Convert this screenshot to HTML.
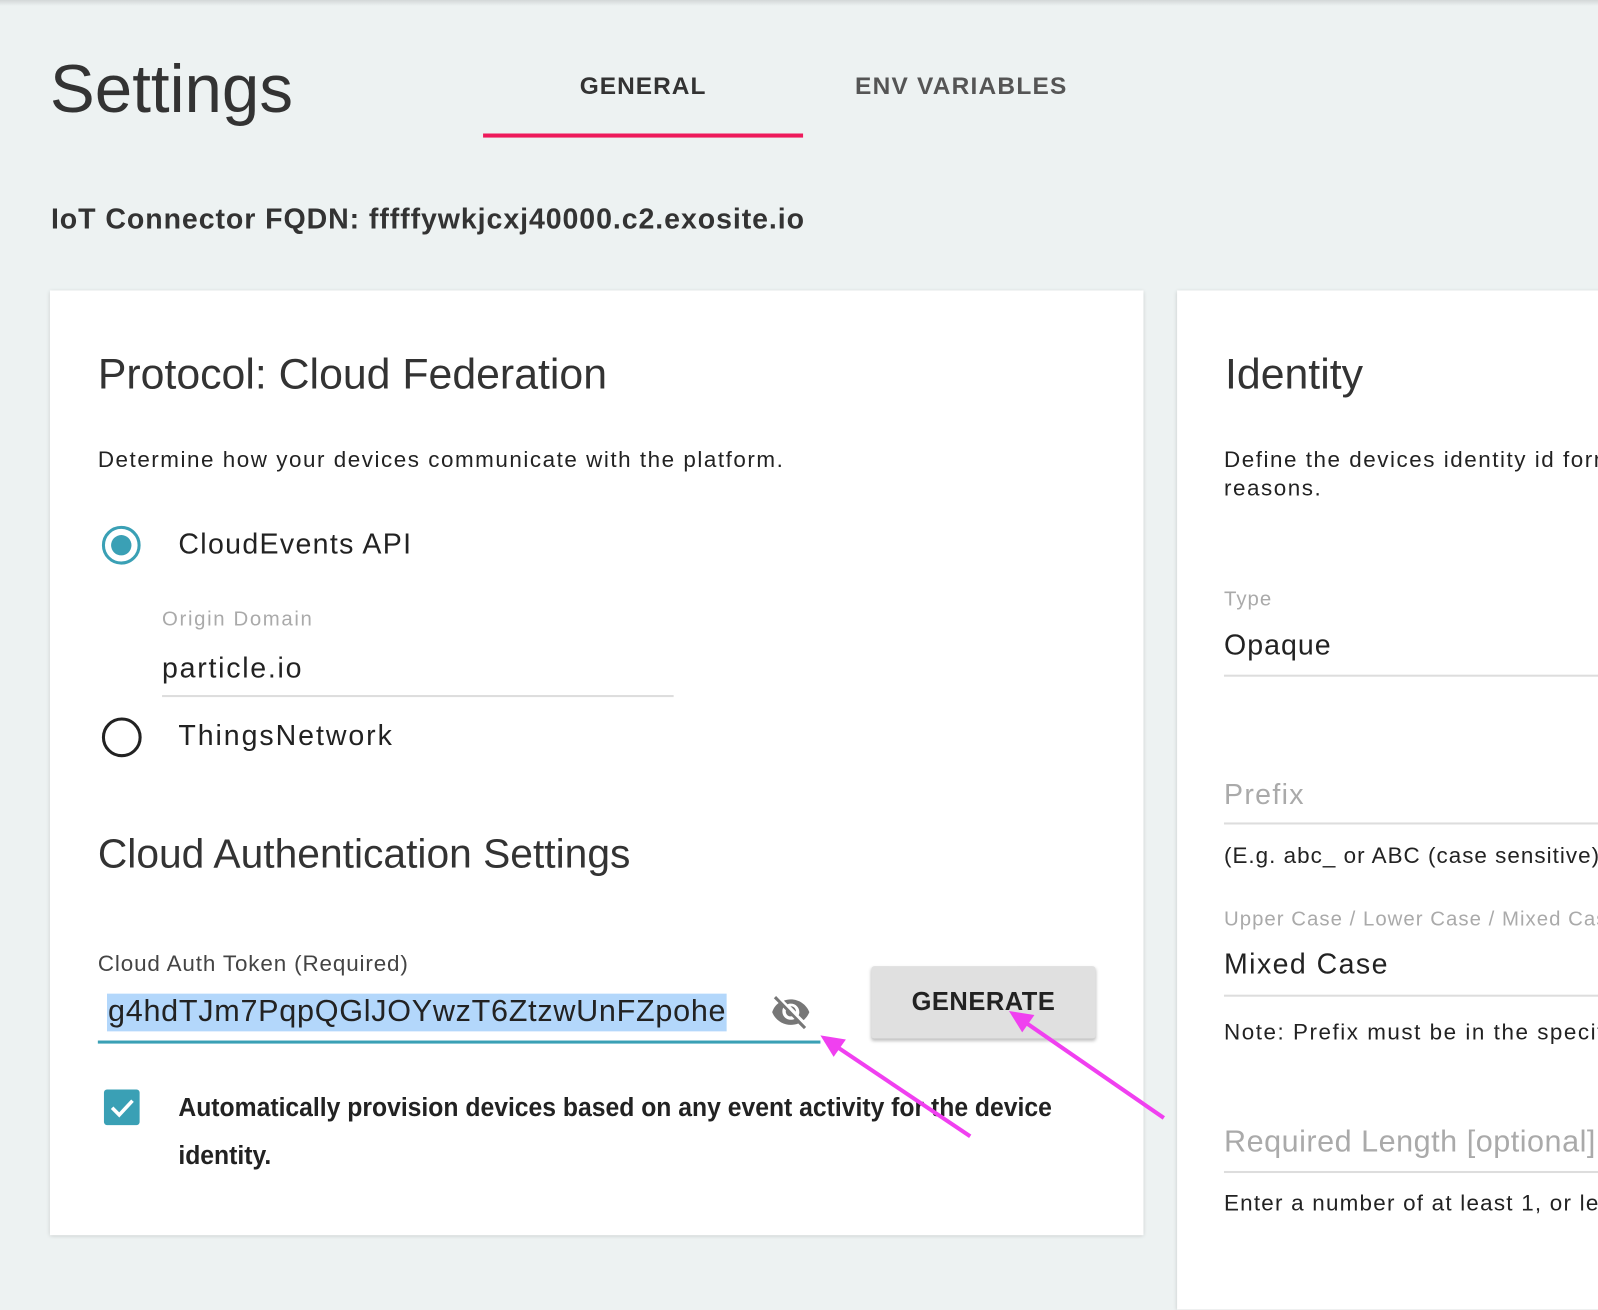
<!DOCTYPE html>
<html><head><meta charset="utf-8"><style>
html,body{margin:0;padding:0;width:1598px;height:1258px;overflow:hidden;background:#edf2f2;}
#w{position:absolute;left:0;top:0;width:1568px;height:1234px;transform:scale(1.01913);transform-origin:0 0;font-family:"Liberation Sans",sans-serif;color:#222;}
.t{position:absolute;white-space:nowrap;line-height:1;}
.card{position:absolute;background:#fff;box-shadow:0 1px 4px rgba(0,0,0,.18);}
.ln{position:absolute;height:2px;background:#ddd;}
.g{color:#aaa;}
</style></head><body>
<div style="position:absolute;left:0;top:0;width:1598px;height:6px;background:linear-gradient(#d3d7d8,#edf2f2);"></div>
<div id="w">
<div class="t" style="left:49px;top:54px;font-size:66px;color:#333;font-weight:300;">Settings</div>
<div class="t" style="left:474px;width:314px;text-align:center;top:73px;font-size:24px;font-weight:bold;color:#333;letter-spacing:1px;">GENERAL</div>
<div style="position:absolute;left:474px;top:131px;width:314px;height:4px;background:#ee1a5b"></div>
<div class="t" style="left:839px;top:73px;font-size:24px;font-weight:bold;color:#555;letter-spacing:1.2px;">ENV VARIABLES</div>
<div class="t" style="left:50px;top:201px;font-size:28px;font-weight:bold;color:#333;letter-spacing:0.9px">IoT Connector FQDN: fffffywkjcxj40000.c2.exosite.io</div>

<div class="card" style="left:49px;top:285px;width:1073px;height:927px"></div>
<div class="card" style="left:1155px;top:285px;width:500px;height:1000px"></div>

<div class="t" style="left:96px;top:346px;font-size:42px;font-weight:300;color:#333">Protocol: Cloud Federation</div>
<div class="t" style="left:96px;top:440px;font-size:22px;letter-spacing:1.5px">Determine how your devices communicate with the platform.</div>
<div style="position:absolute;left:100px;top:516px;width:32px;height:32px;border:3px solid #3aa0b5;border-radius:50%;"></div>
<div style="position:absolute;left:109px;top:525px;width:20px;height:20px;background:#3aa0b5;border-radius:50%;"></div>
<div class="t" style="left:175px;top:520px;font-size:28px;letter-spacing:1.3px">CloudEvents API</div>
<div class="t g" style="left:159px;top:598px;font-size:20px;letter-spacing:1.6px">Origin Domain</div>
<div class="t" style="left:159px;top:642px;font-size:28px;letter-spacing:1.7px">particle.io</div>
<div class="ln" style="left:159px;top:682px;width:502px"></div>
<div style="position:absolute;left:100px;top:704px;width:33px;height:33px;border:3px solid #222;border-radius:50%;"></div>
<div class="t" style="left:175px;top:708px;font-size:28px;letter-spacing:1.9px">ThingsNetwork</div>

<div class="t" style="left:96px;top:818px;font-size:40px;font-weight:300;color:#333">Cloud Authentication Settings</div>
<div class="t" style="left:96px;top:935px;font-size:22px;color:#444;letter-spacing:0.85px">Cloud Auth Token (Required)</div>
<div style="position:absolute;left:105px;top:975px;width:608px;height:37px;background:#b3d7fb"></div>
<div class="t" style="left:106px;top:978px;font-size:30px;color:#222;letter-spacing:0.7px">g4hdTJm7PqpQGlJOYwzT6ZtzwUnFZpohe</div>
<div style="position:absolute;left:96px;top:1021px;width:709px;height:3px;background:#3aa0b5"></div>
<svg style="position:absolute;left:754px;top:974px" width="44" height="40" viewBox="0 0 24 24"><path fill="#777" d="M12 6.5c2.8 0 5 2.2 5 5 0 .6-.1 1.2-.4 1.8l2.9 2.9c1.5-1.3 2.7-2.9 3.4-4.7-1.700-4.4-6-7.5-11-7.5-1.4 0-2.7.3-4 .7l2.2 2.2c.6-.3 1.2-.4 1.900-.4zM2 3.3l2.3 2.3.5.5C3.1 7.4 1.8 9.1 1 11.5c1.7 4.4 6 7.5 11 7.5 1.6 0 3-.3 4.4-.8l.4.4 2.900 2.9 1.3-1.3L3.3 2 2 3.3zm5.5 5.5 1.6 1.6c0 .2-.1.4-.1.6 0 1.7 1.3 3 3 3 .2 0 .4 0 .6-.1l1.6 1.6c-.7.3-1.4.5-2.2.5-2.8 0-5-2.200-5-5 0-.8.2-1.5.5-2.2zm4.3-.8 3.2 3.2V11c0-1.7-1.3-3-3-3h-.2z"/></svg>
<div style="position:absolute;left:855px;top:948px;width:220px;height:71px;background:#e0e0e0;border-radius:3px;box-shadow:0 2px 3px rgba(0,0,0,.25)"></div>
<div class="t" style="left:855px;width:220px;text-align:center;top:971px;font-size:25px;font-weight:bold;color:#222;letter-spacing:0.5px;">GENERATE</div>
<div style="position:absolute;left:102px;top:1069px;width:35px;height:35px;background:#3aa0b5;border-radius:3px"></div>
<svg style="position:absolute;left:102px;top:1069px" width="35" height="35" viewBox="0 0 35 35"><path d="M8 18l7 7 13-14" stroke="#fff" stroke-width="3.5" fill="none"/></svg>
<div class="t" style="left:175px;top:1075px;font-size:25px;font-weight:bold;color:#222;transform:scaleX(.97);transform-origin:0 0">Automatically provision devices based on any event activity for the device</div>
<div class="t" style="left:175px;top:1122px;font-size:25px;font-weight:bold;color:#222;transform:scaleX(.97);transform-origin:0 0">identity.</div>

<div class="t" style="left:1202px;top:346px;font-size:42px;font-weight:300;color:#333">Identity</div>
<div class="t" style="left:1201px;top:440px;font-size:22px;letter-spacing:1.5px">Define the devices identity id form</div>
<div class="t" style="left:1201px;top:468px;font-size:22px;letter-spacing:1.5px">reasons.</div>
<div class="t g" style="left:1201px;top:578px;font-size:20px;letter-spacing:1px">Type</div>
<div class="t" style="left:1201px;top:619px;font-size:28px;letter-spacing:1px">Opaque</div>
<div class="ln" style="left:1201px;top:662px;width:400px"></div>
<div class="t g" style="left:1201px;top:766px;font-size:28px;letter-spacing:1.3px">Prefix</div>
<div class="ln" style="left:1201px;top:807px;width:400px"></div>
<div class="t" style="left:1201px;top:829px;font-size:22px;letter-spacing:1px">(E.g. abc_ or ABC (case sensitive)</div>
<div class="t g" style="left:1201px;top:892px;font-size:20px;letter-spacing:1px">Upper Case / Lower Case / Mixed Case</div>
<div class="t" style="left:1201px;top:932px;font-size:28px;letter-spacing:1.4px">Mixed Case</div>
<div class="ln" style="left:1201px;top:976px;width:400px"></div>
<div class="t" style="left:1201px;top:1002px;font-size:22px;letter-spacing:1.5px">Note: Prefix must be in the specified</div>
<div class="t g" style="left:1201px;top:1106px;font-size:30px;letter-spacing:0.5px">Required Length [optional]</div>
<div class="ln" style="left:1201px;top:1149px;width:400px"></div>
<div class="t" style="left:1201px;top:1170px;font-size:22px;letter-spacing:1.2px">Enter a number of at least 1, or le</div>

<svg style="position:absolute;left:0;top:0" width="1568" height="1234">
<g stroke="#f040f0" stroke-width="4" fill="#f040f0">
<line x1="952" y1="1115" x2="815" y2="1023"/>
<polygon points="805,1016 830,1020 818,1037" stroke="none"/>
<line x1="1142" y1="1097" x2="1000" y2="999"/>
<polygon points="990,992 1015,996 1003,1013" stroke="none"/>
</g></svg>
</div>
</body></html>
